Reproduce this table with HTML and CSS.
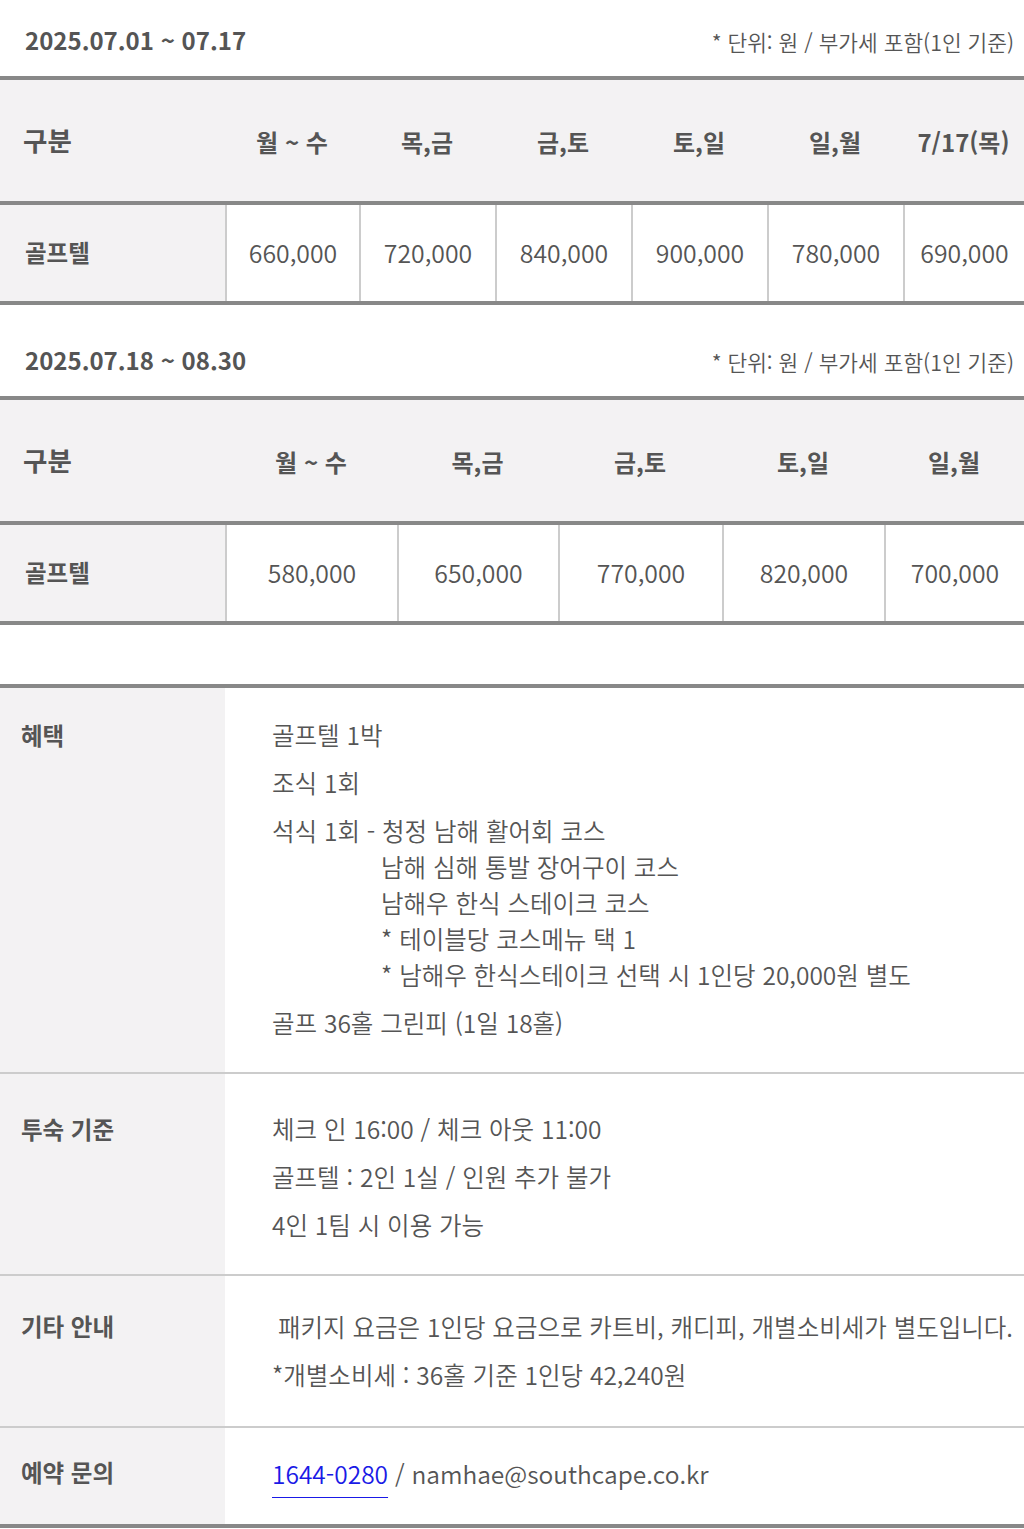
FILE: index.html
```html
<!DOCTYPE html>
<html lang="ko">
<head>
<meta charset="utf-8">
<link rel="stylesheet" href="styles.css">
</head>
<body>
<div class="page">
  <section class="period">
    <div class="period-head">
      <h2 class="period-title">2025.07.01 ~ 07.17</h2>
      <span class="period-note">* 단위: 원 / 부가세 포함(1인 기준)</span>
    </div>
    <div class="price-table cols-6">
      <div class="th th-first">구분</div>
      <div class="th">월 ~ 수</div>
      <div class="th">목,금</div>
      <div class="th">금,토</div>
      <div class="th">토,일</div>
      <div class="th">일,월</div>
      <div class="th">7/17(목)</div>
      <div class="td td-first">골프텔</div>
      <div class="td">660,000</div>
      <div class="td">720,000</div>
      <div class="td">840,000</div>
      <div class="td">900,000</div>
      <div class="td">780,000</div>
      <div class="td">690,000</div>
    </div>
  </section>

  <section class="period period-second">
    <div class="period-head">
      <h2 class="period-title">2025.07.18 ~ 08.30</h2>
      <span class="period-note">* 단위: 원 / 부가세 포함(1인 기준)</span>
    </div>
    <div class="price-table cols-5">
      <div class="th th-first">구분</div>
      <div class="th">월 ~ 수</div>
      <div class="th">목,금</div>
      <div class="th">금,토</div>
      <div class="th">토,일</div>
      <div class="th">일,월</div>
      <div class="td td-first">골프텔</div>
      <div class="td">580,000</div>
      <div class="td">650,000</div>
      <div class="td">770,000</div>
      <div class="td">820,000</div>
      <div class="td">700,000</div>
    </div>
  </section>

  <section class="info">
    <div class="info-row row-benefit">
      <div class="info-label">혜택</div>
      <div class="info-body">
        <p>골프텔 1박</p>
        <p>조식 1회</p>
        <div class="item">석식 1회 - 청정 남해 활어회 코스
          <div class="sub">남해 심해 통발 장어구이 코스<br>남해우 한식 스테이크 코스<br>* 테이블당 코스메뉴 택 1<br>* 남해우 한식스테이크 선택 시 1인당 20,000원 별도</div>
        </div>
        <p>골프 36홀 그린피 (1일 18홀)</p>
      </div>
    </div>
    <div class="info-row row-stay">
      <div class="info-label">투숙 기준</div>
      <div class="info-body">
        <p>체크 인 16:00 / 체크 아웃 11:00</p>
        <p>골프텔 : 2인 1실 / 인원 추가 불가</p>
        <p>4인 1팀 시 이용 가능</p>
      </div>
    </div>
    <div class="info-row row-etc">
      <div class="info-label">기타 안내</div>
      <div class="info-body">
        <p class="lead-space">패키지 요금은 1인당 요금으로 카트비, 캐디피, 개별소비세가 별도입니다.</p>
        <p>*개별소비세 : 36홀 기준 1인당 42,240원</p>
      </div>
    </div>
    <div class="info-row row-contact">
      <div class="info-label">예약 문의</div>
      <div class="info-body">
        <p><a class="tel" href="#">1644-0280</a> / namhae@southcape.co.kr</p>
      </div>
    </div>
  </section>
</div>
</body>
</html>
```

FILE: styles.css
```css
* { box-sizing: border-box; }

html, body {
  margin: 0;
  padding: 0;
  background: #fff;
}

body {
  font-family: "Noto Sans CJK KR", "Noto Sans", sans-serif;
  color: #555;
}

.page {
  width: 1024px;
}

.period-head {
  display: flex;
  justify-content: space-between;
  align-items: center;
  height: 76px;
  padding: 22px 10px 18px 25px;
}

.period-second {
  margin-top: 15px;
}

.period-title {
  margin: 0;
  font-size: 24px;
  font-weight: 700;
  line-height: 36px;
  color: #555;
}

.period-note {
  font-size: 21.4px;
  font-weight: 350;
  line-height: 36px;
  margin-top: 3px;
  color: #555;
}

.price-table {
  display: grid;
  border-top: 4px solid #888;
  border-bottom: 4px solid #888;
}

.cols-6 {
  grid-template-columns: 225px 134px 136px 136px 136px 136px 121px;
}

.cols-5 {
  grid-template-columns: 225px 172px 161px 164px 162px 140px;
}

.th {
  background: #f3f2f3;
  display: flex;
  align-items: center;
  justify-content: center;
  font-size: 24px;
  font-weight: 700;
  border-bottom: 4px solid #888;
  height: 125px;
  padding-top: 1px;
}

.th-first {
  justify-content: flex-start;
  padding-left: 23px;
  padding-top: 0;
  padding-bottom: 2px;
  font-size: 26.5px;
}

.td {
  height: 96px;
  display: flex;
  align-items: center;
  justify-content: center;
  font-size: 24.8px;
  font-weight: 350;
  border-left: 2px solid #ccc;
  padding-bottom: 3px;
}

.td-first {
  background: #f3f2f3;
  justify-content: flex-start;
  padding-left: 25px;
  border-left: 0;
  font-size: 23.5px;
  font-weight: 700;
}

.info {
  margin-top: 59px;
  border-top: 4px solid #888;
  border-bottom: 4px solid #888;
}

.info-row {
  display: grid;
  grid-template-columns: 225px 1fr;
  border-top: 2px solid #ccc;
}

.info-row:first-child {
  border-top: 0;
}

.info-label {
  background: #f3f2f3;
  padding-left: 21px;
  font-size: 23.5px;
  font-weight: 700;
  line-height: 36px;
}

.info-body {
  padding-left: 47px;
  font-size: 24.5px;
  font-weight: 350;
  line-height: 36px;
}

.info-body p,
.info-body .item {
  margin: 0 0 12px;
}

.sub {
  padding-left: 109px;
}

.lead-space {
  padding-left: 6px;
}

.row-benefit .info-label,
.row-benefit .info-body { padding-top: 29px; padding-bottom: 19px; }
.row-stay .info-label,
.row-stay .info-body { padding-top: 37px; padding-bottom: 19px; }
.row-etc .info-label,
.row-etc .info-body { padding-top: 33px; padding-bottom: 21px; }
.row-contact .info-label,
.row-contact .info-body { padding-top: 28px; padding-bottom: 20px; }

.row-etc .info-label { padding-top: 32px; }
.row-contact .info-label { padding-top: 26px; }

.tel {
  color: #1a1ae6;
  text-decoration: underline;
  text-underline-offset: 13px;
  text-decoration-thickness: 1px;
}
```
